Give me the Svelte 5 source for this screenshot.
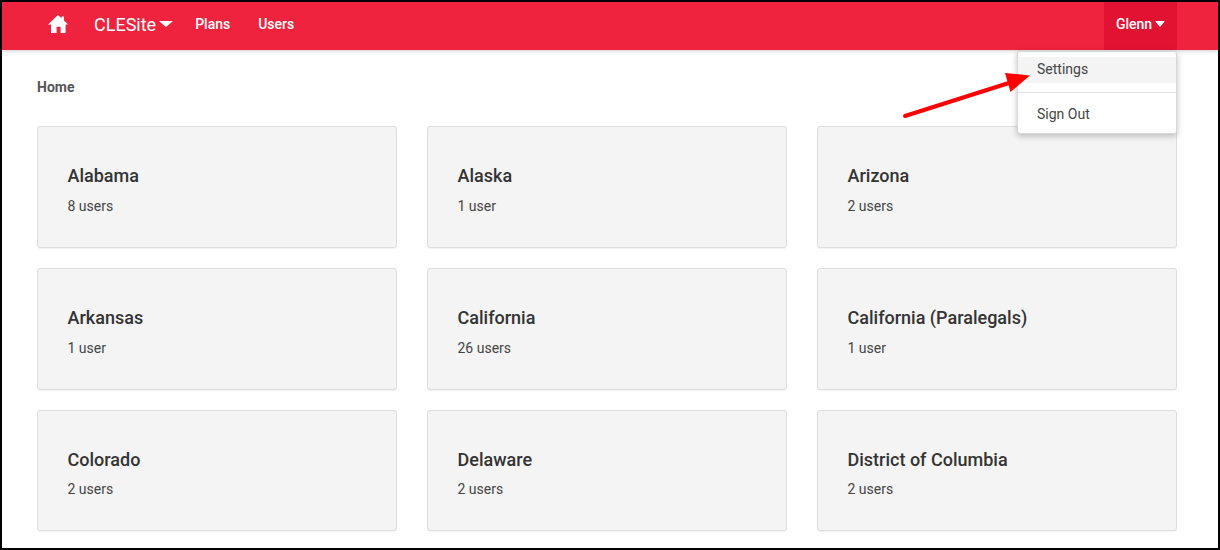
<script>
  const states = [
    { name: 'Alabama', users: '8 users' },
    { name: 'Alaska', users: '1 user' },
    { name: 'Arizona', users: '2 users' },
    { name: 'Arkansas', users: '1 user' },
    { name: 'California', users: '26 users' },
    { name: 'California (Paralegals)', users: '1 user' },
    { name: 'Colorado', users: '2 users' },
    { name: 'Delaware', users: '2 users' },
    { name: 'District of Columbia', users: '2 users' }
  ];
</script>

<div class="frame">
  <nav class="navbar">
    <div class="nav-left">
      <a class="home" href="#home" aria-label="Home">
        <svg width="20" height="18" viewBox="0 0 20 18">
          <path fill="#fff" d="M10 0 L13.5 3.2 V1.4 H16 V5.6 L20 9.6 H17.6 V18 H12.6 V11.8 H8.6 V18 H3 V9.6 H0 Z" />
        </svg>
      </a>
      <a class="brand" href="#site">CLESite<span class="caret big"></span></a>
      <a class="link" href="#plans">Plans</a>
      <a class="link" href="#users">Users</a>
    </div>
    <a class="user" href="#user">Glenn<span class="caret"></span></a>
  </nav>

  <main class="content">
    <div class="crumb">Home</div>
    <div class="grid">
      {#each states as s}
        <div class="card">
          <h3>{s.name}</h3>
          <p>{s.users}</p>
        </div>
      {/each}
    </div>
  </main>

  <div class="menu">
    <a class="item active" href="#settings">Settings</a>
    <div class="divider"></div>
    <a class="item" href="#signout">Sign Out</a>
  </div>

  <svg class="arrow" width="140" height="60" viewBox="900 65 140 60">
    <path d="M905 116 L1012 82" stroke="#ff0000" stroke-width="4" stroke-linecap="round" fill="none" />
    <path d="M1030 75.5 L1005 73 L1010.5 92 Z" fill="#ff0000" />
  </svg>
</div>

<style>
  :global(body) {
    margin: 0;
    background: #fff;
  }

  .frame {
    position: relative;
    box-sizing: border-box;
    width: 1220px;
    height: 550px;
    border: 2px solid #000;
    overflow: hidden;
    background: #fff;
    font-family: Roboto, "Liberation Sans", sans-serif;
    color: #333;
  }

  a {
    text-decoration: none;
    color: inherit;
  }

  .navbar {
    display: flex;
    justify-content: space-between;
    height: 48px;
    padding: 0 41px 0 46px;
    background: #f0233f;
    color: #fff;
    box-shadow: 0 1px 4px rgba(0, 0, 0, 0.2);
  }

  .nav-left {
    display: flex;
    align-items: center;
    padding-bottom: 4px;
  }

  .home {
    display: flex;
    margin-right: 26px;
    margin-top: -1px;
  }

  .brand {
    display: flex;
    align-items: center;
    font-size: 18px;
    margin-right: 22px;
  }

  .link {
    font-size: 14px;
    font-weight: 500;
    margin-right: 28px;
  }

  .caret {
    display: inline-block;
    width: 0;
    height: 0;
    margin-left: 3px;
    border-left: 5.5px solid transparent;
    border-right: 5.5px solid transparent;
    border-top: 6px solid #fff;
    border-radius: 1px;
  }

  .caret.big {
    margin-left: 3px;
    border-left-width: 7px;
    border-right-width: 7px;
  }

  .user {
    display: flex;
    align-items: center;
    justify-content: center;
    width: 73px;
    padding-bottom: 4px;
    box-sizing: border-box;
    font-size: 14px;
    font-weight: 500;
    background: #e21233;
  }

  .content {
    padding: 0 41px 0 35px;
  }

  .crumb {
    margin-top: 28px;
    height: 18px;
    line-height: 18px;
    font-size: 14px;
    font-weight: 700;
    color: #555;
  }

  .grid {
    display: grid;
    grid-template-columns: repeat(3, 360px);
    grid-auto-rows: 121.8px;
    column-gap: 30px;
    row-gap: 20px;
    margin-top: 30px;
  }

  .card {
    box-sizing: border-box;
    padding: 38px 30px 0 29.5px;
    background: #f4f4f4;
    border: 1px solid #dedede;
    border-radius: 3px;
    box-shadow: 0 1px 1px rgba(0, 0, 0, 0.05);
  }

  .card h3 {
    margin: 0;
    font-size: 18px;
    line-height: 22px;
    font-weight: 500;
    color: #333;
  }

  .card p {
    margin: 10.8px 0 0;
    font-size: 14px;
    line-height: 17px;
    color: #444;
  }

  .menu {
    position: absolute;
    left: 1015px;
    top: 49px;
    box-sizing: border-box;
    width: 160px;
    height: 83px;
    padding-top: 5px;
    background: #fff;
    border: 1px solid #d8d8d8;
    border-radius: 3px;
    box-shadow: 0 2px 6px rgba(0, 0, 0, 0.25);
  }

  .item {
    display: block;
    height: 26px;
    line-height: 25px;
    padding-left: 19px;
    font-size: 14px;
    color: #444;
  }

  .item.active {
    background: #f4f4f4;
  }

  .divider {
    height: 1px;
    margin: 9px 0;
    background: #e2e2e2;
  }

  .arrow {
    position: absolute;
    left: 898px;
    top: 63px;
  }
</style>
